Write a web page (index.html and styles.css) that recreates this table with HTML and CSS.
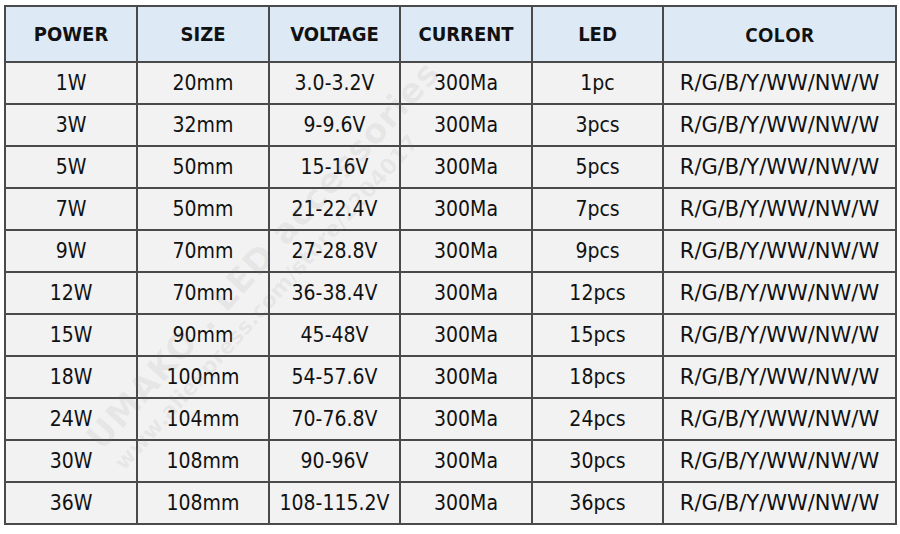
FILE: index.html
```html
<!DOCTYPE html>
<html lang="en">
<head>
    <meta charset="UTF-8">
    <title>LED Specification</title>
    <link rel="stylesheet" href="styles.css">
</head>
<body>
    <div class="sheet">
        <table class="spec-table">
            <colgroup>
                <col class="c-power">
                <col class="c-size">
                <col class="c-volt">
                <col class="c-current">
                <col class="c-led">
                <col class="c-color">
            </colgroup>
            <thead>
                <tr>
                    <th>POWER</th>
                    <th>SIZE</th>
                    <th>VOLTAGE</th>
                    <th>CURRENT</th>
                    <th>LED</th>
                    <th class="th-color">COLOR</th>
                </tr>
            </thead>
            <tbody>
                <tr><td>1W</td><td>20mm</td><td>3.0-3.2V</td><td>300Ma</td><td>1pc</td><td class="td-color">R/G/B/Y/WW/NW/W</td></tr>
                <tr><td>3W</td><td>32mm</td><td>9-9.6V</td><td>300Ma</td><td>3pcs</td><td class="td-color">R/G/B/Y/WW/NW/W</td></tr>
                <tr><td>5W</td><td>50mm</td><td>15-16V</td><td>300Ma</td><td>5pcs</td><td class="td-color">R/G/B/Y/WW/NW/W</td></tr>
                <tr><td>7W</td><td>50mm</td><td>21-22.4V</td><td>300Ma</td><td>7pcs</td><td class="td-color">R/G/B/Y/WW/NW/W</td></tr>
                <tr><td>9W</td><td>70mm</td><td>27-28.8V</td><td>300Ma</td><td>9pcs</td><td class="td-color">R/G/B/Y/WW/NW/W</td></tr>
                <tr><td>12W</td><td>70mm</td><td>36-38.4V</td><td>300Ma</td><td>12pcs</td><td class="td-color">R/G/B/Y/WW/NW/W</td></tr>
                <tr><td>15W</td><td>90mm</td><td>45-48V</td><td>300Ma</td><td>15pcs</td><td class="td-color">R/G/B/Y/WW/NW/W</td></tr>
                <tr><td>18W</td><td>100mm</td><td>54-57.6V</td><td>300Ma</td><td>18pcs</td><td class="td-color">R/G/B/Y/WW/NW/W</td></tr>
                <tr><td>24W</td><td>104mm</td><td>70-76.8V</td><td>300Ma</td><td>24pcs</td><td class="td-color">R/G/B/Y/WW/NW/W</td></tr>
                <tr><td>30W</td><td>108mm</td><td>90-96V</td><td>300Ma</td><td>30pcs</td><td class="td-color">R/G/B/Y/WW/NW/W</td></tr>
                <tr><td>36W</td><td>108mm</td><td>108-115.2V</td><td>300Ma</td><td>36pcs</td><td class="td-color">R/G/B/Y/WW/NW/W</td></tr>
            </tbody>
        </table>

        <!-- faint store watermark over the table -->
        <div class="watermark">
            <div class="wm-brand">UMAKO . LED accessories</div>
            <div class="wm-url">www.aliexpress.com/store/2204017</div>
        </div>
    </div>
</body>
</html>
```

FILE: styles.css
```css
html, body {
    margin: 0;
    padding: 0;
    background-color: #ffffff;
}
body {
    width: 900px;
    height: 534px;
    overflow: hidden;
}
.sheet {
    position: relative;
    height: 529px;
    overflow: hidden;
    padding: 5px 0 0 4px;
}
.spec-table {
    border-collapse: collapse;
    table-layout: fixed;
    width: 891px;
    font-family: "DejaVu Sans Condensed", "DejaVu Sans", sans-serif;
    color: #111111;
}
.c-power { width: 132px; }
.c-size { width: 132px; }
.c-volt { width: 131px; }
.c-current { width: 132px; }
.c-led { width: 131px; }
.c-color { width: 233px; }

.spec-table th,
.spec-table td {
    border: 2px solid #4a4a4a;
    text-align: center;
    padding: 0;
}
.spec-table th {
    height: 54px;
    background-color: #dde9f5;
    font-size: 20px;
    font-weight: bold;
}
.th-color {
    font-family: "Open Sans", sans-serif;
    font-size: 21px;
}
.spec-table td {
    height: 40px;
    background-color: #f2f2f2;
    font-size: 21px;
}
.spec-table td.td-color {
    font-family: "DejaVu Sans", sans-serif;
    font-size: 21px;
}

.watermark {
    position: absolute;
    left: 78px;
    top: 430px;
    color: rgba(120, 120, 120, 0.09);
    font-family: "DejaVu Sans", sans-serif;
    font-weight: bold;
    white-space: nowrap;
    pointer-events: none;
    transform: rotate(-48deg);
    transform-origin: left top;
}
.wm-brand {
    font-size: 34px;
    letter-spacing: 1px;
}
.wm-url {
    font-size: 22px;
    margin-top: 2px;
}
```
